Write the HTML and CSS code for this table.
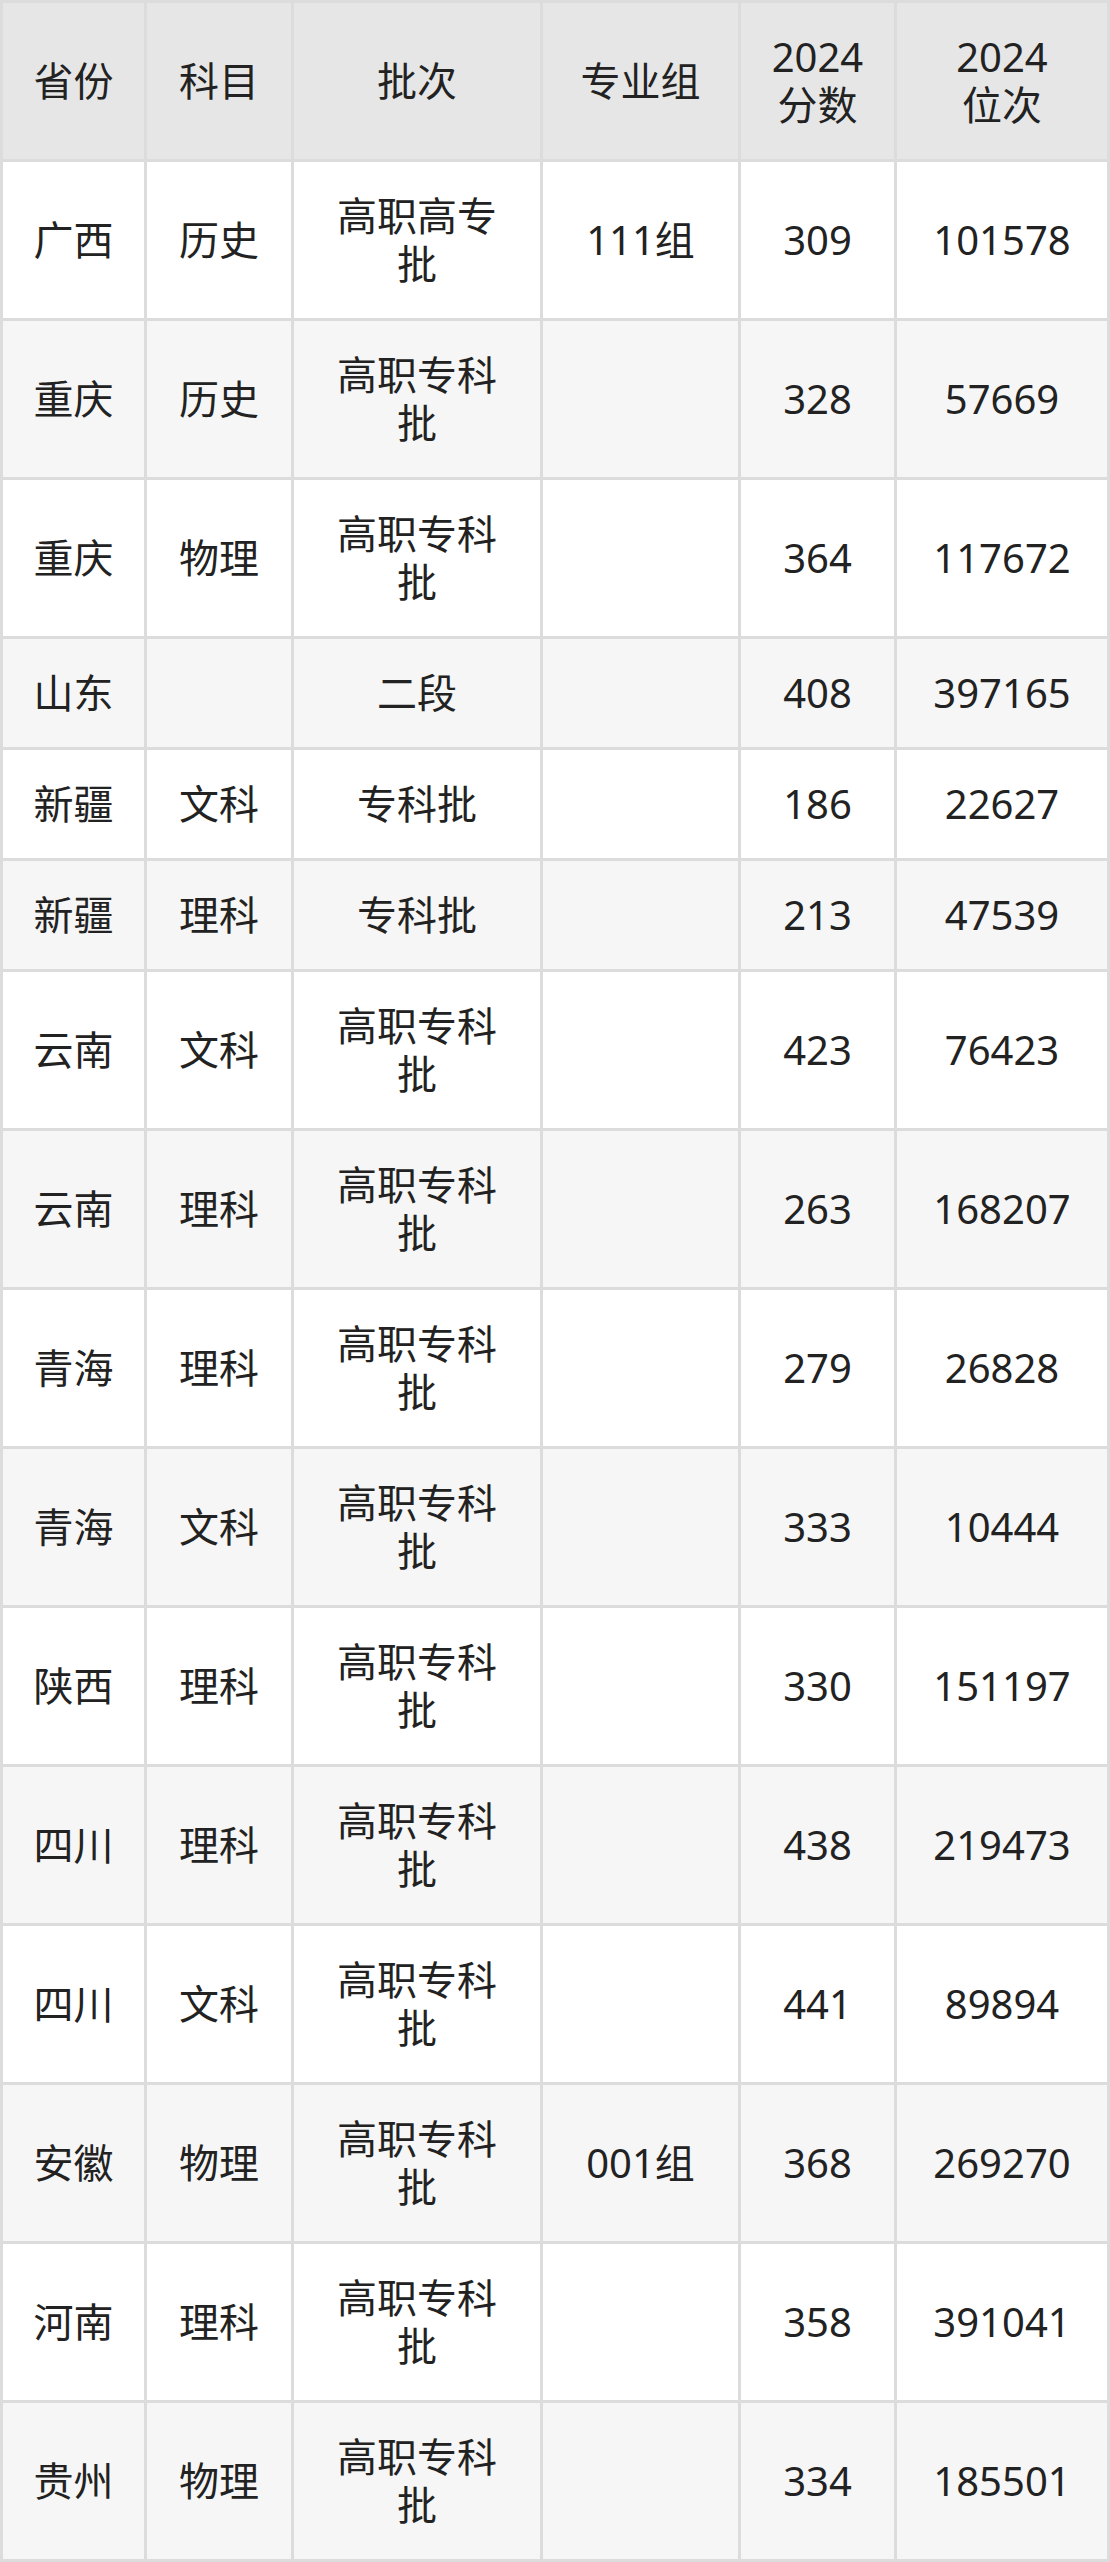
FILE: index.html
```html
<!DOCTYPE html>
<html lang="zh-CN">
<head>
<meta charset="utf-8">
<title>2024 分数位次</title>
<link rel="stylesheet" href="styles.css">
</head>
<body>
<table class="score-table">
  <colgroup>
    <col class="c-prov">
    <col class="c-subj">
    <col class="c-batch">
    <col class="c-group">
    <col class="c-score">
    <col class="c-rank">
  </colgroup>
  <thead>
    <tr>
      <th>省份</th>
      <th>科目</th>
      <th>批次</th>
      <th>专业组</th>
      <th>2024<br>分数</th>
      <th>2024<br>位次</th>
    </tr>
  </thead>
  <tbody>
    <tr class="tall"><td>广西</td><td>历史</td><td>高职高专批</td><td>111组</td><td>309</td><td>101578</td></tr>
    <tr class="tall"><td>重庆</td><td>历史</td><td>高职专科批</td><td></td><td>328</td><td>57669</td></tr>
    <tr class="tall"><td>重庆</td><td>物理</td><td>高职专科批</td><td></td><td>364</td><td>117672</td></tr>
    <tr class="short"><td>山东</td><td></td><td>二段</td><td></td><td>408</td><td>397165</td></tr>
    <tr class="short"><td>新疆</td><td>文科</td><td>专科批</td><td></td><td>186</td><td>22627</td></tr>
    <tr class="short"><td>新疆</td><td>理科</td><td>专科批</td><td></td><td>213</td><td>47539</td></tr>
    <tr class="tall"><td>云南</td><td>文科</td><td>高职专科批</td><td></td><td>423</td><td>76423</td></tr>
    <tr class="tall"><td>云南</td><td>理科</td><td>高职专科批</td><td></td><td>263</td><td>168207</td></tr>
    <tr class="tall"><td>青海</td><td>理科</td><td>高职专科批</td><td></td><td>279</td><td>26828</td></tr>
    <tr class="tall"><td>青海</td><td>文科</td><td>高职专科批</td><td></td><td>333</td><td>10444</td></tr>
    <tr class="tall"><td>陕西</td><td>理科</td><td>高职专科批</td><td></td><td>330</td><td>151197</td></tr>
    <tr class="tall"><td>四川</td><td>理科</td><td>高职专科批</td><td></td><td>438</td><td>219473</td></tr>
    <tr class="tall"><td>四川</td><td>文科</td><td>高职专科批</td><td></td><td>441</td><td>89894</td></tr>
    <tr class="tall"><td>安徽</td><td>物理</td><td>高职专科批</td><td>001组</td><td>368</td><td>269270</td></tr>
    <tr class="tall"><td>河南</td><td>理科</td><td>高职专科批</td><td></td><td>358</td><td>391041</td></tr>
    <tr class="tall"><td>贵州</td><td>物理</td><td>高职专科批</td><td></td><td>334</td><td>185501</td></tr>
  </tbody>
</table>
</body>
</html>
```
FILE: styles.css
```css
html, body {
  margin: 0;
  padding: 0;
  background: #ffffff;
}

.score-table {
  width: 1110px;
  table-layout: fixed;
  border-collapse: separate;
  border-spacing: 3px;
  background: #dcdcdc;
  font-family: "Noto Sans", "Noto Sans CJK SC", sans-serif;
  font-size: 40px;
  line-height: 48px;
  color: #222222;
}

.c-prov { width: 141px; }
.c-subj { width: 144px; }
.c-batch { width: 246px; }
.c-group { width: 195px; }
.c-score { width: 153px; }
.c-rank { width: 210px; }

.score-table th,
.score-table td {
  padding: 0 30px;
  text-align: center;
  vertical-align: middle;
  font-weight: normal;
  box-sizing: border-box;
}

.score-table th {
  padding: 0 10px;
  height: 156px;
  background: #e6e6e6;
}

.score-table td {
  background: #ffffff;
}

.score-table tbody tr:nth-child(even) td {
  background: #f6f6f6;
}

.score-table tr.tall td {
  height: 156px;
}

.score-table tr.short td {
  height: 108px;
}
```
